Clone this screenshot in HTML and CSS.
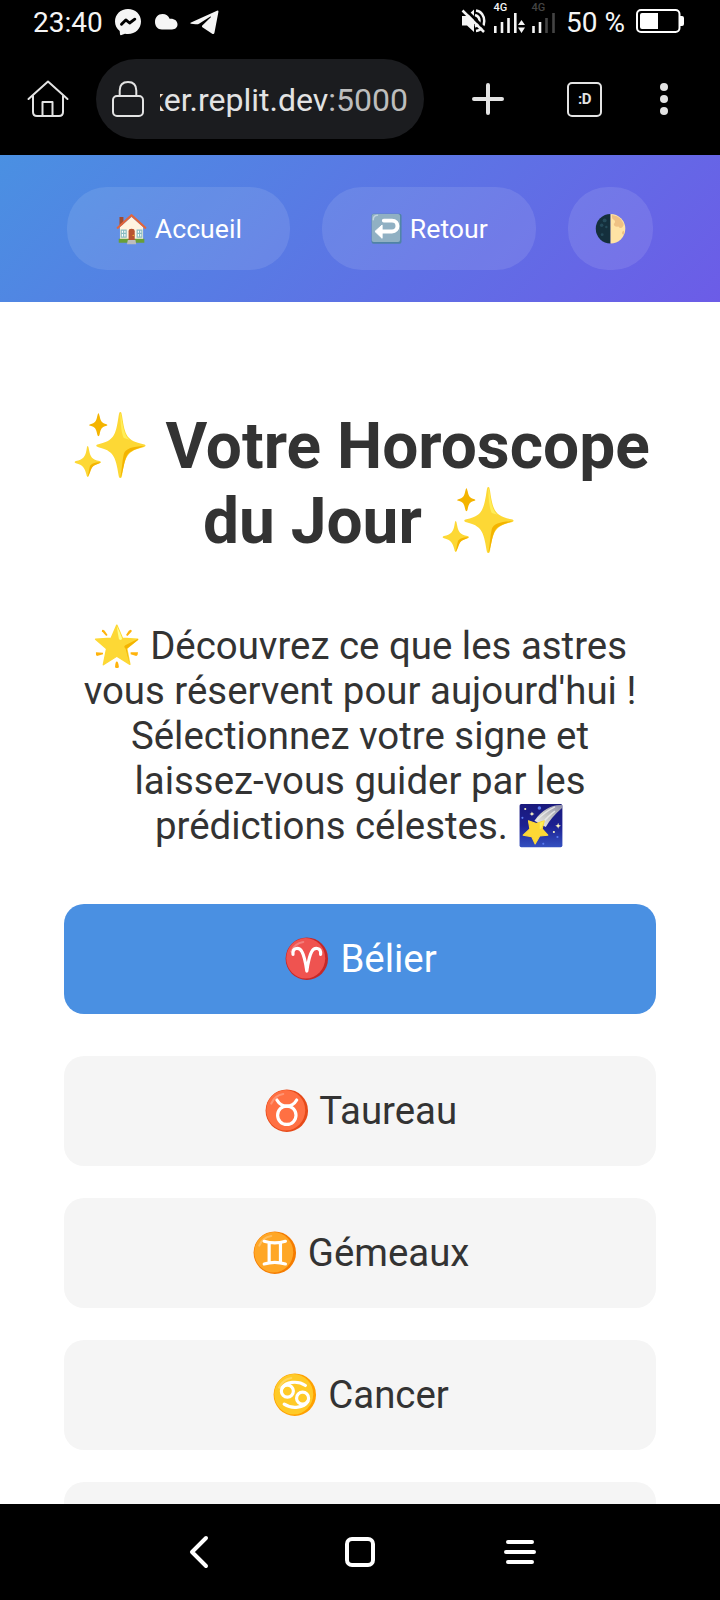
FILE: index.html
```html
<!DOCTYPE html>
<html lang="fr">
<head>
<meta charset="utf-8">
<title>Horoscope du Jour</title>
<link rel="stylesheet" href="styles.css">
</head>
<body>
<svg class="defs" aria-hidden="true">
  <defs>
    <linearGradient id="night" x1="0" y1="0" x2="0" y2="1"><stop offset="0" stop-color="#1a1a7c"/><stop offset=".5" stop-color="#1c2091"/><stop offset="1" stop-color="#3450c0"/></linearGradient>
    <linearGradient id="tail" x1="1" y1="0" x2="0" y2="1"><stop offset="0" stop-color="#8c8ca8"/><stop offset=".5" stop-color="#c4c4c4"/><stop offset="1" stop-color="#eee"/></linearGradient>
    <symbol id="sparkles" viewBox="-4 -1 131 131">
      <path fill="#fdd835" d="M80 6C82 6 82 8 83 13C88 48 92 56 120 62C125 63 125 66 120 67C93 73 88 82 83 116C82 122 78 122 77 116C72 82 67 73 42 67C37 66 37 63 42 62C68 56 72 48 77 13C78 8 78 6 80 6Z"/>
      <path fill="#ffee58" d="M81 9C84 30 87 48 96 54L86 51C82 44 80 25 80 9Z"/>
      <path fill="#f4b400" d="M122 65C101 66 89 69 86 79C83 91 83 106 80 119C86 112 86 84 95 77C102 71 113 69 122 65Z"/>
      <path fill="#f4b400" d="M42 8C43 8 43 10 44 13C46 23 48 25 56 27C58 28 58 29 56 30C48 32 46 35 44 45C43 49 41 49 40 45C38 35 36 32 28 30C25 29 25 28 28 27C36 25 38 23 40 13C41 10 41 8 42 8Z"/>
      <path fill="#fdd835" d="M23 65C25 65 25 69 26 73C28 84 31 88 44 91C47 92 47 94 44 95C32 98 28 103 26 114C25 120 22 120 21 114C18 103 15 98 3 95C0 94 0 92 3 91C15 88 19 84 21 73C22 69 22 65 23 65Z"/>
      <path fill="#f4b400" d="M46 93C34 93 28 96 27 101C25 108 25 113 23 118C29 112 28 103 34 99C39 96 43 96 46 93Z"/>
    </symbol>
    <symbol id="star" viewBox="0 0 128 128">
      <g fill="#ffb30b"><path d="M25 19Q21 19 22 23L34 37L38 34L29 21Z"/><path d="M103 19Q107 19 106 24L94 37L90 34L98 22Z"/><path d="M5 83L25 84L25 88L8 93Q4 92 5 83Z"/><path d="M124 83L103 83L103 88L119 93Q124 92 124 83Z"/><path d="M64 109Q60 109 59 124Q60 128 64 127Q69 128 70 124Q68 109 64 109Z"/></g>
      <path fill="#fdd835" stroke="#fdd835" stroke-width="4" stroke-linejoin="round" d="M64 6L80 43L123 46L92 72L101 117L64 94L26 118L35 73L4 46L48 43Z"/>
      <path fill="#f4b400" d="M123 45L88 63Q82 67 89 73L101 119L92 73L125 47Z"/><path fill="#ffff8d" d="M64 9Q75 31 79 44Q75 52 70 45Q67 31 64 9Z"/>
    </symbol>
    <symbol id="comet" viewBox="0 0 128 128">
      <rect x="4" y="3" width="121" height="122" rx="5" fill="url(#night)"/>
      <path fill="url(#tail)" d="M119 6Q78 6 46 50L78 68Q92 42 124 14L124 6Z"/>
      <path fill="none" stroke="#eee" stroke-width="4" opacity=".8" d="M52 49Q78 23 104 11M68 57Q88 34 104 23"/>
      <path fill="#fdd835" stroke="#fdd835" stroke-width="3" stroke-linejoin="round" d="M29 50L51 58L74 50L68 73L84 91L61 93L48 116L38 95L14 91L33 73Z"/>
      <path fill="#ffee58" d="M61 56L73 51L65 72L61 74Z"/>
      <g fill="#fff9c4"><path d="M39 24L41 29L46 31L41 33L39 37L37 33L32 31L37 29Z"/><path d="M113 56L115 62L121 64L115 67L113 73L111 67L105 64L111 62Z"/><circle cx="20" cy="17" r="3"/><circle cx="101" cy="82" r="3"/></g>
      <g fill="#5c7cf0"><circle cx="60" cy="14" r="5"/><circle cx="12" cy="42" r="3"/><circle cx="111" cy="96" r="3"/><circle cx="71" cy="115" r="3"/></g>
    </symbol>
    <symbol id="aries" viewBox="0 0 128 128">
      <circle cx="64" cy="64" r="60" fill="#c62828"/><ellipse cx="61" cy="63" rx="55" ry="57" fill="#ef5350"/>
      <path class="shine" d="M20 44Q29 21 54 17"/>
      <path class="sign" d="M25 52C23 31 43 31 50 44Q58 58 64 99Q70 58 78 44C85 31 105 31 103 52"/>
    </symbol>
    <symbol id="taurus" viewBox="0 0 128 128">
      <circle cx="64" cy="64" r="60" fill="#e64a19"/><ellipse cx="61" cy="63" rx="55" ry="57" fill="#ff7043"/>
      <path class="shine" d="M20 44Q29 21 54 17"/>
      <circle class="sign" cx="64" cy="77" r="26"/><path class="sign" d="M36 34Q46 51 64 51Q82 51 92 34"/>
    </symbol>
    <symbol id="gemini" viewBox="0 0 128 128">
      <circle cx="64" cy="64" r="60" fill="#f57c00"/><ellipse cx="61" cy="63" rx="55" ry="57" fill="#ffa726"/>
      <path class="shine" d="M20 44Q29 21 54 17"/>
      <path class="sign" d="M34 32Q64 41 94 32M34 96Q64 87 94 96M48 37V91M80 37V91"/>
    </symbol>
    <symbol id="cancer" viewBox="0 0 128 128">
      <circle cx="64" cy="64" r="60" fill="#ffa000"/><ellipse cx="61" cy="63" rx="55" ry="57" fill="#ffca28"/>
      <path class="shine" d="M20 44Q29 21 54 17"/>
      <circle class="sign" cx="43" cy="54" r="17"/><circle class="sign" cx="86" cy="74" r="17"/>
      <path class="sign" d="M28 45C38 28 72 23 94 38M101 83C90 101 57 106 34 91"/>
    </symbol>
    <symbol id="house" viewBox="0 0 128 128">
      <path fill="#a14b30" d="M15 16H31V50H15Z"/><path fill="#fff3e0" d="M17 57L64 16L111 57V112H17Z"/>
      <path fill="#689f38" d="M12 105H116V121H12Z"/><path fill="#bdbdbd" d="M49 110H80L83 128H45Z"/>
      <path fill="#b8522f" d="M52 110V74Q52 64 64 64Q77 64 77 74V110Z"/><circle cx="71" cy="91" r="3" fill="#ffca28"/>
      <g fill="#fff" stroke="#8bbdc2" stroke-width="5"><path d="M22 70H42V98H22ZM32 70V98M22 83H42M87 70H106V98H87ZM97 70V98M87 83H106"/></g>
      <path fill="none" stroke="#e1653c" stroke-width="9" stroke-linejoin="round" stroke-linecap="round" d="M8 60L64 9L120 60"/>
    </symbol>
    <symbol id="back-arrow" viewBox="0 0 128 128">
      <rect x="3" y="3" width="122" height="122" rx="8" fill="#4f83a5"/><rect x="4" y="4" width="115" height="114" rx="8" fill="#90b0c3"/>
      <path d="M10 27Q10 10 27 9" fill="none" stroke="#c0d4df" stroke-width="6" stroke-linecap="round"/>
      <path fill="none" stroke="#fff" stroke-width="16" stroke-linecap="round" d="M53 31H86C116 31 116 75 86 75H42"/><path fill="#fff" stroke="#fff" stroke-width="4" stroke-linejoin="round" d="M17 75L46 49V103Z"/>
    </symbol>
    <symbol id="half-moon" viewBox="0 0 128 128">
      <path fill="#142f3c" d="M64 4A60 60 0 0 0 64 124Z"/><path fill="#ffe3a4" d="M64 4A60 60 0 0 1 64 124Z"/>
      <path fill="#efc184" d="M70 8Q91 10 105 23L117 43Q119 51 112 58Q104 66 96 55Q79 58 77 45Q87 34 78 27Q68 25 70 8ZM117 72Q124 77 116 89Q109 85 111 77Z"/>
      <g fill="#244a59"><circle cx="40" cy="30" r="8"/><circle cx="28" cy="50" r="7"/><circle cx="47" cy="57" r="5"/><circle cx="30" cy="88" r="6"/></g>
    </symbol>
  </defs>
</svg>

<div class="status">
  <div class="status-left">
    <span class="clock">23:40</span>
    <svg class="messenger" width="26" height="27" viewBox="0 0 26 27"><path fill="#f5f5f5" d="M13 0C5.600 0 0 5.400 0 12.500C0 16.300 1.600 19.500 4.700 21.900L5 25.300Q5.300 26.500 6.500 26L10 24.700Q11.500 25 13 25C20.400 25 26 19.600 26 12.500S20.400 0 13 0Z"/><path fill="none" stroke="#000" stroke-width="2.900" stroke-linejoin="round" stroke-linecap="round" d="M6.500 15.300L10.800 10.900L14.600 14L19.800 10.200"/></svg>
    <svg class="cloud" width="23" height="16" viewBox="0 0 23 16"><path fill="#f5f5f5" d="M7.500 0C11 0 13.500 2 14.600 4.800C19.500 4.400 22.500 7 22.500 10.300C22.500 13.500 20.300 15.500 17 15.500H7C2.500 15.500 0 12 0 8C0 3.500 3 0 7.500 0Z"/></svg>
    <svg class="telegram" width="29" height="25" viewBox="0 0 29 25"><path fill="#f5f5f5" d="M1 12.500L27 .7Q28.700.1 28.400 2L24.500 22.500Q24 25 21.800 23.500L12.400 17.300Q11.400 16.300 12.500 15.200L20.800 7.200Q21.500 6 20 6.700L9 13.700Q7.500 14.700 5.500 14.200L1 13.700Q-.3 13.200 1 12.500Z"/></svg>
  </div>
  <div class="status-right">
    <svg width="96" height="36" viewBox="0 0 96 36">
      <path fill="#f5f5f5" d="M1 16H6L13 9.500V32L6 25.500H1Z"/>
      <path fill="none" stroke="#f5f5f5" stroke-width="2.500" d="M15 10.500C26 12 26 30 15 31M14 15C20 17 20 24 14 26.500"/>
      <path stroke="#000" stroke-width="3" d="M3 8L24 29"/><path stroke="#f5f5f5" stroke-width="2.500" d="M1.500 10.500L23 32"/>
      <path stroke="#f5f5f5" stroke-width="2.600" d="M34.300 26V33M41 22V33M47.500 18V33M54.300 13V33"/>
      <path fill="#f5f5f5" d="M57 25L60.500 20L64 25ZM57 27.500H64L60.500 33Z"/>
      <path stroke="#f5f5f5" stroke-width="2.600" d="M72.500 26V33M79 22V33"/><path stroke="#444" stroke-width="2.600" d="M85.500 18V33M92.500 13V33"/>
      <text class="net" x="32.500" y="11" fill="#f5f5f5">4G</text><text class="net" x="70.500" y="11" fill="#444">4G</text>
    </svg>
    <span class="percent">50 %</span>
    <svg class="battery" width="48" height="24" viewBox="0 0 48 24"><rect x="1" y="1" width="42.500" height="22" rx="4" fill="none" stroke="#fff" stroke-width="2"/><path fill="#fff" d="M6 4H22V20H6Q4 20 4 18V6Q4 4 6 4ZM44 7H46Q48 7 48 9V15Q48 17 46 17H44Z"/></svg>
  </div>
</div>

<div class="browser">
  <svg class="home" width="42" height="38" viewBox="0 0 42 38"><g fill="none" stroke="#e3e3e3" stroke-width="2" stroke-linecap="round" stroke-linejoin="round"><path d="M1.500 19L21 1.500L40.500 19"/><path d="M6 16V32Q6 36 10 36H32Q36 36 36 32V16M15.500 36V22H25.500V36"/></g></svg>
  <div class="url">
    <svg width="32" height="36" viewBox="0 0 32 36"><g fill="none" stroke="#e3e3e3" stroke-width="2"><rect x="1" y="15" width="30" height="20" rx="4"/><path d="M7.700 15V9.500Q7.700 1 16 1Q24.300 1 24.300 9.500V15"/></g></svg>
    <div class="address"><span>ker.replit.dev<span class="port">:5000</span></span></div>
  </div>
  <svg class="plus" width="32" height="32" viewBox="0 0 32 32"><path stroke="#e3e3e3" stroke-width="4" stroke-linecap="round" d="M2 16H30M16 2V30"/></svg>
  <div class="tabs">:D</div>
  <svg class="dots" width="8" height="32" viewBox="0 0 8 32"><g fill="#e3e3e3"><circle cx="4" cy="4" r="4"/><circle cx="4" cy="16" r="4"/><circle cx="4" cy="28" r="4"/></g></svg>
</div>

<header class="header">
  <a class="pill home-link"><svg class="emoji"><use href="#house"/></svg> Accueil</a>
  <a class="pill back-link"><svg class="emoji"><use href="#back-arrow"/></svg> Retour</a>
  <a class="pill theme"><svg class="emoji"><use href="#half-moon"/></svg></a>
</header>

<main class="main">
  <h1><svg class="emoji"><use href="#sparkles"/></svg> Votre Horoscope<br>du Jour <svg class="emoji"><use href="#sparkles"/></svg></h1>
  <p><svg class="emoji"><use href="#star"/></svg> Découvrez ce que les astres<br>vous réservent pour aujourd'hui !<br>Sélectionnez votre signe et<br>laissez-vous guider par les<br>prédictions célestes. <svg class="emoji"><use href="#comet"/></svg></p>
  <div class="signs">
    <div class="card active"><svg class="emoji"><use href="#aries"/></svg> Bélier</div>
    <div class="card"><svg class="emoji"><use href="#taurus"/></svg> Taureau</div>
    <div class="card"><svg class="emoji"><use href="#gemini"/></svg> Gémeaux</div>
    <div class="card"><svg class="emoji"><use href="#cancer"/></svg> Cancer</div>
    <div class="card"></div>
  </div>
</main>

<nav class="navbar">
  <svg width="40" height="40" viewBox="0 0 40 40"><path d="M26 6L12 20L26 34"/></svg>
  <svg width="40" height="40" viewBox="0 0 40 40"><rect x="7" y="7" width="26" height="26" rx="5"/></svg>
  <svg width="40" height="40" viewBox="0 0 40 40"><path d="M8 10H32M6 20H34M8 30H32"/></svg>
</nav>
</body>
</html>
```
FILE: styles.css
```css
* { box-sizing: border-box; }
body {
  margin: 0;
  width: 720px;
  height: 1600px;
  overflow: hidden;
  display: flex;
  flex-direction: column;
  font-family: Roboto, sans-serif;
  background: #fff;
  color: #333;
}
svg { flex: none; }
.defs { position: absolute; width: 0; height: 0; }

.status {
  flex: none;
  height: 48px;
  display: flex;
  justify-content: space-between;
  padding: 0 36px 0 33px;
  background: #000;
  color: #f5f5f5;
  font-size: 28px;
  line-height: 33px;
}
.status-left, .status-right { display: flex; align-items: flex-start; }
.clock, .percent { padding-top: 6px; white-space: nowrap; }
.messenger { margin: 9px 0 0 12px; }
.cloud { margin: 14px 0 0 14px; }
.telegram { margin: 10px 0 0 12px; }
.percent { margin-left: 9px; }
.battery { margin: 9px 0 0 11px; }
.net { font: 500 11px Roboto, sans-serif; }

.browser {
  flex: none;
  height: 107px;
  display: flex;
  align-items: center;
  padding: 0 52px 5px 27px;
  background: #000;
}
.url {
  width: 328px;
  height: 80px;
  margin-left: 27px;
  padding: 0 16px;
  border-radius: 40px;
  background: #1b1c1f;
  display: flex;
  align-items: center;
}
.address {
  width: 248px;
  margin-left: 16px;
  padding-top: 2px;
  overflow: hidden;
  display: flex;
  justify-content: flex-end;
  white-space: nowrap;
  font-size: 32px;
  line-height: 40px;
  color: #e3e3e3;
}
.port { color: #bdbdbd; }
.plus { margin-left: 48px; }
.tabs {
  width: 35px;
  height: 35px;
  margin-left: 63px;
  border: 2px solid #e3e3e3;
  border-radius: 5px;
  color: #e3e3e3;
  font-size: 15px;
  font-weight: 700;
  letter-spacing: -.6px;
  line-height: 30px;
  text-align: center;
}
.dots { margin-left: 58px; }

.header {
  flex: none;
  height: 147px;
  display: flex;
  justify-content: center;
  align-items: center;
  gap: 32px;
  background: linear-gradient(135deg, #4a90e2, #6c5ce7);
}
.pill {
  height: 83px;
  border-radius: 40px;
  background: rgba(255, 255, 255, .1);
  color: #fff;
  font-size: 26.67px;
  line-height: 84px;
  text-align: center;
  white-space: nowrap;
}
.home-link { width: 223px; }
.back-link { width: 214px; }
.theme { width: 85px; }

.emoji {
  width: 1.24em;
  height: 1.18em;
  margin: -.3em 0;
  vertical-align: .05em;
  overflow: visible;
}
.sign { fill: none; stroke: #fff; stroke-width: 9; stroke-linecap: round; stroke-linejoin: round; }
.shine { fill: none; stroke: #fff; stroke-width: 6; stroke-linecap: round; opacity: .25; }

.main {
  flex: 1;
  min-height: 0;
  overflow: hidden;
  padding: 107px 64px 0;
  text-align: center;
  white-space: nowrap;
}
h1 { margin: 0 0 64px; font-size: 64px; line-height: 75px; font-weight: 700; }
p { margin: 0 0 56px; font-size: 38.4px; line-height: 45px; }
.signs { display: flex; flex-direction: column; gap: 32px; }
.card {
  height: 110px;
  border-radius: 20px;
  background: #f5f5f5;
  font-size: 38.4px;
  line-height: 110px;
}
.active { margin-bottom: 10px; background: #4a90e2; color: #fff; }

.navbar {
  flex: none;
  height: 96px;
  display: flex;
  justify-content: center;
  gap: 120px;
  padding-top: 28px;
  background: #000;
}
.navbar svg { overflow: visible; fill: none; stroke: #fff; stroke-width: 4; stroke-linecap: round; stroke-linejoin: round; }
```
